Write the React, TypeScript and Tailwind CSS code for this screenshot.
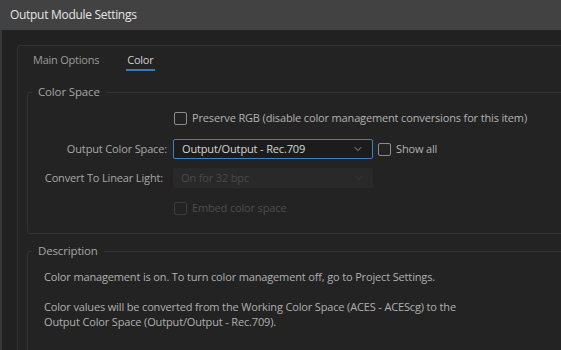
import { ChevronDown } from "lucide-react";

// Output Module Settings dialog, "Color" tab

function Check({ label, disabled }: { label: string; disabled?: boolean }) {
  return (
    <label className="flex items-center gap-[5px]">
      <span
        className={
          "block h-[13px] w-[13px] rounded-[2px] border-[1.5px] " +
          (disabled ? "border-[#3d3d3d]" : "border-[#8c8c8c]")
        }
      />
      <span className={disabled ? "text-[#4d4d4d]" : "text-[#b3b3b3]"}>{label}</span>
    </label>
  );
}

function Select({ value, disabled }: { value: string; disabled?: boolean }) {
  return (
    <div
      className={
        "flex h-[20px] w-[200px] items-center justify-between rounded-[2px] pl-[8px] pr-[8px] " +
        (disabled
          ? "bg-[#292929] text-[#4a4a4a]"
          : "border border-[#3f7fc7] bg-[#1c1c1c] pl-[7px] text-[#d6d6d6]")
      }
    >
      <span>{value}</span>
      <ChevronDown
        className={disabled ? "text-[#3f3f3f]" : "text-[#bdbdbd]"}
        size={12}
        strokeWidth={1.5}
      />
    </div>
  );
}

export default function App() {
  return (
    <div
      className="h-[350px] w-[561px] overflow-hidden bg-[#212121] text-[11px] tracking-[-0.15px] text-[#b0b0b0]"
      style={{ fontFamily: '"Open Sans", "Segoe UI", sans-serif' }}
    >
      <div className="flex h-[30px] items-center bg-[#424242] pl-[10px] text-[12px] tracking-[-0.3px] text-[#e4e4e4]">
        Output Module Settings
      </div>

      <div className="h-[320px] border-l-2 border-[#383838] pl-[15px] pt-[15px]">
        <div className="h-[320px] w-[600px] rounded-tl-[4px] border-l border-t border-[#343434] bg-[#232323] pl-[9px]">
          <div className="flex h-[25px] items-start gap-[27px] pl-[6px] pt-[6px] text-[11px] leading-[16px] tracking-[-0.23px]">
            <span className="text-[#9c9c9c]">Main Options</span>
            <div className="flex flex-col items-start">
              <span className="ml-[1px] text-[#cfcfcf]">Color</span>
              <span className="mt-[1px] h-[2px] w-[29px] bg-[#3c78b4]" />
            </div>
          </div>

          <fieldset className="mt-[13px] h-[150px] w-[560px] rounded-[3px] border border-[#333333] pl-0">
            <legend className="ml-[4px] px-[6px] text-[11.5px] leading-[16px] text-[#a6a6a6]">
              Color Space
            </legend>
            <div className="flex flex-col">
              <div className="mt-[10px] flex h-[16px] items-center pl-[146px]">
                <Check label="Preserve RGB (disable color management conversions for this item)" />
              </div>
              <div className="mt-[13px] flex items-center">
                <span className="w-[139px] text-right text-[#a8a8a8]">Output Color Space:</span>
                <div className="ml-[6px]">
                  <Select value="Output/Output - Rec.709" />
                </div>
                <div className="ml-[5px]">
                  <Check label="Show all" />
                </div>
              </div>
              <div className="mt-[9px] flex items-center">
                <span className="w-[135px] text-right text-[#a8a8a8]">Convert To Linear Light:</span>
                <div className="ml-[10px]">
                  <Select value="On for 32 bpc" disabled />
                </div>
              </div>
              <div className="mt-[12px] flex items-center pl-[146px]">
                <Check label="Embed color space" disabled />
              </div>
            </div>
          </fieldset>

          <fieldset className="mt-[9px] h-[120px] w-[560px] rounded-[3px] border border-[#333333]">
            <legend className="ml-[4px] px-[6px] text-[11.5px] leading-[16px] text-[#a6a6a6]">
              Description
            </legend>
            <div className="mt-[10px] pl-[16px] leading-[15px]">
              <p>Color management is on. To turn color management off, go to Project Settings.</p>
              <p className="mt-[15px]">
                Color values will be converted from the Working Color Space (ACES - ACEScg) to the
                <br />
                Output Color Space (Output/Output - Rec.709).
              </p>
            </div>
          </fieldset>
        </div>
      </div>
    </div>
  );
}
